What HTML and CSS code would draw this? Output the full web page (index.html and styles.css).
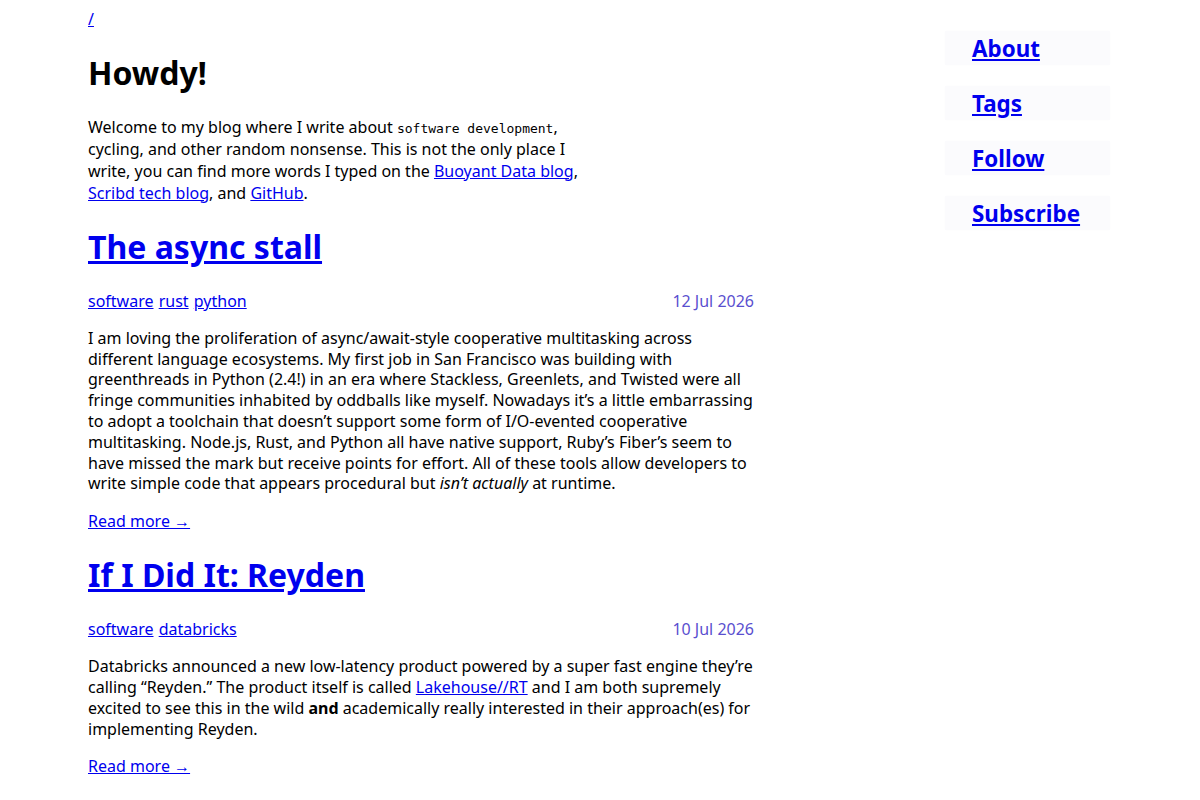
FILE: index.html
```html
<!DOCTYPE html>
<html lang="en">
<head>
  <meta charset="UTF-8" />
  <meta name="viewport" content="width=device-width, initial-scale=1" />
  <title>Howdy!</title>
  <link rel="stylesheet" href="styles.css">
</head>
<body>

<div class="page">
  <main class="content">
    <nav class="crumbs"><a href="/">/</a></nav>

    <h1>Howdy!</h1>

    <p class="intro">
      Welcome to my blog where I write about <code>software development</code>,
      cycling, and other random nonsense. This is not the only place I
      write, you can find more words I typed on the <a href="#">Buoyant Data blog</a>,
      <a href="#">Scribd tech blog</a>, and <a href="#">GitHub</a>.
    </p>

    <!-- posts -->
    <article class="post">
      <h2 class="post-title"><a href="#">The async stall</a></h2>
      <div class="post-meta">
        <div class="tags">
          <a href="#">software</a>
          <a href="#">rust</a>
          <a href="#">python</a>
        </div>
        <span class="date">12 Jul 2026</span>
      </div>
      <p class="summary">
        I am loving the proliferation of async/await-style cooperative multitasking across
        different language ecosystems. My first job in San Francisco was building with
        greenthreads in Python (2.4!) in an era where Stackless, Greenlets, and Twisted were all
        fringe communities inhabited by oddballs like myself. Nowadays it’s a little embarrassing
        to adopt a toolchain that doesn’t support some form of I/O-evented cooperative
        multitasking. Node.js, Rust, and Python all have native support, Ruby’s Fiber’s seem to
        have missed the mark but receive points for effort. All of these tools allow developers to
        write simple code that appears procedural but <em>isn’t actually</em> at runtime.
      </p>
      <a class="more" href="#">Read more →</a>
    </article>

    <article class="post">
      <h2 class="post-title"><a href="#">If I Did It: Reyden</a></h2>
      <div class="post-meta">
        <div class="tags">
          <a href="#">software</a>
          <a href="#">databricks</a>
        </div>
        <span class="date">10 Jul 2026</span>
      </div>
      <p class="summary">
        Databricks announced a new low-latency product powered by a super fast engine they’re
        calling “Reyden.” The product itself is called <a href="#">Lakehouse//RT</a> and I am both supremely
        excited to see this in the wild <strong>and</strong> academically really interested in their approach(es) for
        implementing Reyden.
      </p>
      <a class="more" href="#">Read more →</a>
    </article>
  </main>

  <aside class="sidebar">
    <a class="side-link" href="#">About</a>
    <a class="side-link" href="#">Tags</a>
    <a class="side-link" href="#">Follow</a>
    <a class="side-link" href="#">Subscribe</a>
  </aside>
</div>

</body>
</html>
```

FILE: styles.css
```css
body {
  margin: 8px 0;
  font-family: "Noto Sans", sans-serif;
  font-size: 16px;
  color: #000;
  background: #fff;
}
a {
  color: #0000ee;
}
.page {
  max-width: 1024px;
  margin: 0 auto;
  display: flex;
  justify-content: space-between;
  align-items: flex-start;
}
.content {
  width: 666px;
}
h1 {
  font-size: 2em;
  margin: 0.67em 0;
}
.intro {
  max-width: 500px;
  margin: 16px 0;
}
code {
  font-family: "DejaVu Sans Mono", monospace;
  font-size: 13px;
}
.post-title {
  font-size: 2em;
  margin: 21px 0 22px;
}
.post-meta {
  display: flex;
  justify-content: space-between;
}
.tags a {
  margin-right: 1px;
}
.date {
  color: #5a4fcf;
}
.summary {
  line-height: 1.3;
  margin: 16px 0;
}
.more {
  display: inline-block;
  margin-bottom: 0;
}
.sidebar {
  width: 165px;
  margin: 23px 2px 0 0;
  display: flex;
  flex-direction: column;
  gap: 21px;
}
.side-link {
  display: block;
  padding: 2px 27px 1px;
  background: #fbfbfd;
  box-shadow: 0 0 3px #fcfcfd;
  font-size: 1.4em;
  font-weight: bold;
}
```
